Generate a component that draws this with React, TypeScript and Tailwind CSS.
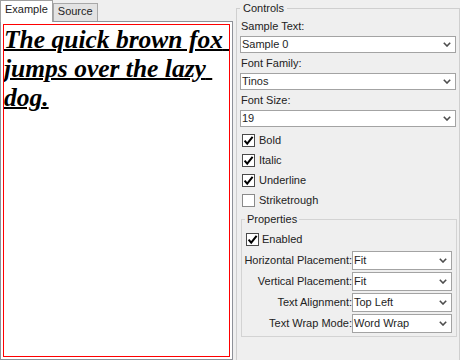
import React from "react";

const Chevron = () => (
  <svg width="8" height="5" viewBox="0 0 8 5" className="shrink-0">
    <path d="M0.8 0.8 L4 4 L7.2 0.8" fill="none" stroke="#4d4d4d" strokeWidth="1.6" />
  </svg>
);

function Combo({ value, tall }: { value: string; tall?: boolean }) {
  return (
    <div
      className={`${tall ? "h-[19px]" : "h-[17px]"} bg-white border border-[#a3a3a3] flex items-center justify-between pl-[1px] pr-[4px] text-[#1e1e1e]`}
    >
      <span className="whitespace-nowrap">{value}</span>
      <Chevron />
    </div>
  );
}

function Check({ checked }: { checked: boolean }) {
  return (
    <span
      className={`w-[13px] h-[13px] shrink-0 border ${checked ? "border-[#4a4a4a]" : "border-[#8a8a8a]"} bg-white flex items-center justify-center`}
    >
      {checked && (
        <svg width="11" height="11" viewBox="0 0 11 11">
          <path d="M1.6 5.6 L4.2 8.6 L9.6 1.8" fill="none" stroke="#000" strokeWidth="2" />
        </svg>
      )}
    </span>
  );
}

function CheckRow({ label, checked }: { label: string; checked: boolean }) {
  return (
    <div className="h-[20px] flex items-center gap-[4px] pl-[2px]">
      <Check checked={checked} />
      <span>{label}</span>
    </div>
  );
}

function FormRow({ label, value }: { label: string; value: string }) {
  return (
    <>
      <div className="h-[19px] leading-[19px] text-right whitespace-nowrap">{label}</div>
      <Combo value={value} tall />
    </>
  );
}

export default function App() {
  return (
    <div className="w-[460px] h-[360px] bg-[#efefef] flex overflow-hidden text-[11px] leading-[13px] text-[#222] font-['Liberation_Sans',Arial,sans-serif]">
      {/* Left: tab widget */}
      <div className="w-[233px] shrink-0 flex flex-col">
        <div className="h-[21px] flex items-start">
          <div className="relative z-10 h-[22px] bg-white border border-b-0 border-[#a0a0a0] px-[4px] pt-[2px]">
            Example
          </div>
          <div className="mt-[3px] h-[18px] bg-[#e3e3e3] border border-b-0 border-[#a8a8a8] px-[4px] pt-[1px]">
            Source
          </div>
        </div>
        <div className="h-[339px] border border-[#8e9198] bg-white p-[2px]">
          <div className="h-full border border-[#ff0000] bg-white overflow-hidden">
            <div className="font-['Liberation_Serif',Tinos,serif] font-bold italic underline decoration-2 text-[25.5px] leading-[29px] text-black whitespace-nowrap">
              <div>The quick brown fox{"\u00a0"}</div>
              <div>jumps over the lazy{"\u00a0"}</div>
              <div>dog.</div>
            </div>
          </div>
        </div>
      </div>

      {/* Right: Controls group */}
      <fieldset className="ml-[3px] mt-[1px] -mb-[2px] w-[224px] min-w-0 border border-[#cfcfcf] px-[3px] pt-[4px] flex flex-col gap-[3px]">
        <legend className="px-[3px] leading-[14px]">Controls</legend>
        <div className="h-[14px] leading-[14px] pl-[1px]">Sample Text:</div>
        <Combo value="Sample 0" />
        <div className="h-[14px] leading-[14px] pl-[1px]">Font Family:</div>
        <Combo value="Tinos" />
        <div className="h-[14px] leading-[14px] pl-[1px]">Font Size:</div>
        <Combo value="19" />
        <div className="flex flex-col">
          <CheckRow label="Bold" checked />
          <CheckRow label="Italic" checked />
          <CheckRow label="Underline" checked />
          <CheckRow label="Striketrough" checked={false} />
        </div>
        <fieldset className="ml-[1px] w-[216px] min-w-0 border border-[#d3d3d3] pl-[2px] pr-[4px] pt-[4px] pb-[3px]">
          <legend className="ml-[1px] px-[2px] leading-[13px]">Properties</legend>
          <div className="grid grid-cols-[108px_100px] gap-y-[2px]">
            <div className="col-span-2 h-[19px] flex items-center gap-[3px] pl-[2px]">
              <Check checked />
              <span>Enabled</span>
            </div>
            <FormRow label="Horizontal Placement:" value="Fit" />
            <FormRow label="Vertical Placement:" value="Fit" />
            <FormRow label="Text Alignment:" value="Top Left" />
            <FormRow label="Text Wrap Mode:" value="Word Wrap" />
          </div>
        </fieldset>
      </fieldset>
    </div>
  );
}
